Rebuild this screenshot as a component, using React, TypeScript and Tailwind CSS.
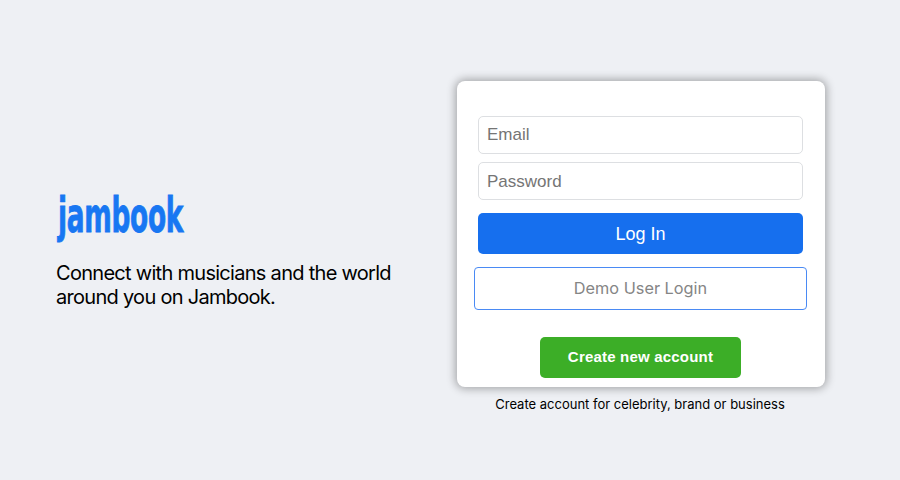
export default function App() {
  return (
    <div className="h-[480px] w-[900px] bg-[#eef0f4] flex items-start font-['Inter',sans-serif]">
      {/* Left side */}
      <div className="w-[457px] pl-[56px] pt-[188px]">
        <div className="ml-[2px] h-[60px] w-[128px] overflow-visible">
          <span className="block origin-top-left scale-x-[0.645] scale-y-[1.17] whitespace-nowrap font-['DejaVu_Sans',sans-serif] text-[41px] font-bold leading-[48px] tracking-[-0.5px] text-[#1877f2] [-webkit-text-stroke:0.8px_#1877f2]">
            jambook
          </span>
        </div>
        <p className="mt-[13px] w-[345px] text-[20px] leading-[24px] tracking-[-0.71px] text-black">
          Connect with musicians and the world around you on Jambook.
        </p>
      </div>

      {/* Login card */}
      <div className="pt-[81px] flex flex-col items-center">
        <div className="w-[368px] h-[306px] rounded-lg bg-white px-[21px] pt-[35px] shadow-[0_0_8px_2px_rgba(0,0,0,0.3)] font-['Liberation_Sans',sans-serif]">
          <input
            placeholder="Email"
            className="block h-[38px] w-[325px] rounded-[5px] border border-[#dddfe2] px-[8px] text-[17px] outline-none placeholder:text-[#757575]"
          />
          <input
            placeholder="Password"
            className="mt-[8px] block h-[38px] w-[325px] rounded-[5px] border border-[#dddfe2] px-[8px] pt-[1px] text-[17px] outline-none placeholder:text-[#757575]"
          />
          <button className="mt-[13px] block h-[41px] w-[325px] rounded-[5px] bg-[#166fee] pt-[1px] text-[18px] text-white">
            Log In
          </button>
          <button className="-ml-[4px] mt-[13px] block h-[43px] w-[333px] rounded-[4px] border border-[#4a8af4] bg-white font-['Inter',sans-serif] text-[16.3px] text-[#858585]">
            Demo User Login
          </button>
          <div className="mt-[27px] flex justify-center pr-[1px]">
            <button className="h-[41px] w-[201px] rounded-[5px] bg-[#3cae27] text-[15px] font-bold tracking-[0.2px] text-white">
              Create new account
            </button>
          </div>
        </div>
        <p className="mr-[2px] mt-[9px] text-[13px] leading-[16px] text-black">
          Create account for celebrity, brand or business
        </p>
      </div>
    </div>
  )
}
